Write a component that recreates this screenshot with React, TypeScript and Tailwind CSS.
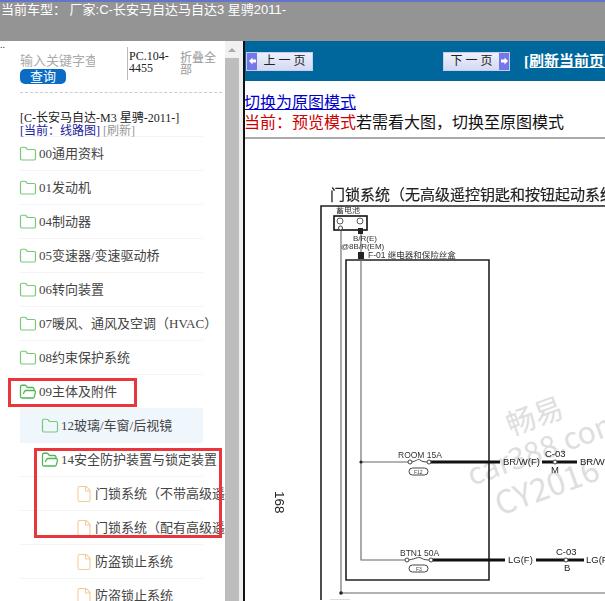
import { File, Folder, FolderOpen } from "lucide-react";

const serif = "font-['Liberation_Serif','Noto_Sans_CJK_SC',serif]";

const topFolders = ["00通用资料", "01发动机", "04制动器", "05变速器/变速驱动桥", "06转向装置", "07暖风、通风及空调（HVAC）", "08约束保护系统"];

function Row({ level = 0, open, file, active, children }: { level?: number; open?: boolean; file?: boolean; active?: boolean; children: string }) {
  const pad = level === 0 ? "pl-0" : level === 1 ? "pl-[22px]" : "pl-[55px]";
  return (
    <div className={`flex h-[34px] w-[183px] shrink-0 items-center border-b border-[#f4f4f4] ${pad} ${active ? "bg-[#eff6fc]" : ""}`}>
      {file ? (
        <File size={18} strokeWidth={1.4} className="shrink-0 text-[#f3c994]" />
      ) : open ? (
        <FolderOpen size={18} strokeWidth={1.7} className="-ml-px shrink-0 text-[#4fb653]" />
      ) : (
        <Folder size={18} strokeWidth={1.6} className="-ml-px shrink-0 text-[#78c87a]" />
      )}
      <span className="whitespace-nowrap pl-[2px] text-[13px] text-[#444]">{children}</span>
    </div>
  );
}

function PageButton({ label, dir }: { label: string; dir: "prev" | "next" }) {
  const arrow = (
    <span className="flex h-full w-[10px] items-center justify-center bg-[#7378e6]">
      <svg width="7" height="8" viewBox="0 0 7 8">
        <path d={dir === "prev" ? "M0 4 3.5 0.5V2.5H7V5.5H3.500V7.5Z" : "M7 4 3.5 0.5V2.5H0V5.5H3.5V7.5Z"} fill="#fff" />
      </svg>
    </span>
  );
  return (
    <div className="flex h-[19px] w-[67px] shrink-0 items-stretch border border-[#c6cdf0] bg-gradient-to-b from-[#eef0fb] to-[#d5d9f2]">
      {dir === "prev" && arrow}
      <span className={`flex-1 whitespace-pre text-center text-[12px] leading-[17px] text-[#222] ${serif}`}>{label}</span>
      {dir === "next" && arrow}
    </div>
  );
}

function Diagram() {
  return (
    <svg viewBox="245 140 360 461" className="h-[461px] w-[360px]" fill="none">
      <g fill="#dedede" fontFamily="'Noto Sans CJK SC', 'Liberation Sans', sans-serif">
        <text x="511" y="437" fontSize="29" transform="rotate(-20 511 437)">畅易</text>
        <text x="472" y="487" fontSize="30" transform="rotate(-20 472 487)">car388.com</text>
        <text x="500" y="517" fontSize="32" transform="rotate(-20 500 517)">CY2016</text>
      </g>
      <g className="blur-[0.3px]">
        <text x="330" y="201" fontSize="15" fill="#222" stroke="#222" strokeWidth="0.2" fontFamily="'Noto Sans CJK SC', sans-serif">门锁系统（无高级遥控钥匙和按钮起动系统</text>
        <path d="M321 601V207H605" stroke="#222" strokeWidth="1.6" />
        <path d="M346 261H489V581H346Z" stroke="#222" strokeWidth="1.6" />
        <path d="M341 231V594H605M361 231V561H405M361 463H408" stroke="#666" strokeWidth="1.1" />
        <rect x="334" y="217" width="33" height="14" stroke="#111" strokeWidth="1.6" />
        <circle cx="340" cy="222" r="3" stroke="#555" />
        <circle cx="360" cy="222" r="3" stroke="#555" />
        <circle cx="340.500" cy="229" r="2" fill="#fff" stroke="#444" />
        <rect x="358" y="229" width="5" height="6" fill="#222" />
        <rect x="358" y="253" width="6" height="7" fill="#222" />
        <circle cx="361" cy="463" r="1.6" fill="#222" />
        <circle cx="341" cy="594" r="1.8" fill="#222" />
        <path d="M330 601H350" stroke="#bbb" />
        <g fill="#333" fontFamily="'Liberation Sans', 'Noto Sans CJK SC', sans-serif" fontSize="8">
          <text x="336" y="214">蓄电池</text>
          <text x="353" y="242">B/R(E)</text>
          <text x="341" y="250">@8B/R(EM)</text>
          <text x="368" y="259" fontSize="8.500">F-01 继电器和保险丝盒</text>
          <text x="398" y="459" fontSize="8.500">ROOM 15A</text>
          <text x="400" y="557" fontSize="8.500">BTN1 50A</text>
        </g>
        <g fill="#222" fontFamily="'Liberation Sans', sans-serif" fontSize="9.500">
          <text x="503" y="466">BR/W(F)</text>
          <text x="545" y="458">C-03</text>
          <text x="551" y="474">M</text>
          <text x="580" y="466">BR/W</text>
          <text x="508" y="564">LG(F)</text>
          <text x="556" y="556">C-03</text>
          <text x="564" y="572">B</text>
          <text x="586" y="564">LG(F)</text>
        </g>
        <text x="275" y="492" fontSize="13.500" fill="#222" fontFamily="'Liberation Sans', sans-serif" transform="rotate(90 275 492)">168</text>
        <path d="M430 463H500M542 463H577M432 561H505M536 561H584" stroke="#111" strokeWidth="3" />
        <path d="M410 463C416 463 418 459 420 461S426 463 428 463M407 561C414 561 418 557 421 559S428 561 430 561" stroke="#444" />
        <circle cx="410" cy="463" r="2" fill="#fff" stroke="#444" />
        <circle cx="429" cy="463" r="2" fill="#fff" stroke="#444" />
        <circle cx="407" cy="561" r="2" fill="#fff" stroke="#444" />
        <circle cx="431" cy="561" r="2" fill="#fff" stroke="#444" />
        <circle cx="555" cy="463" r="2" fill="#fff" stroke="#444" />
        <circle cx="566" cy="561" r="2" fill="#fff" stroke="#444" />
        <rect x="409" y="469" width="19" height="7" rx="3.500" stroke="#444" />
        <rect x="409" y="566" width="19" height="7" rx="3.500" stroke="#444" />
        <g fill="#444" fontFamily="'Liberation Sans', sans-serif" fontSize="5">
          <text x="414" y="474.500">F12</text>
          <text x="416" y="571.500">F3</text>
        </g>
      </g>
    </svg>
  );
}

export default function App() {
  return (
    <div className="flex h-[601px] w-[605px] flex-col overflow-hidden bg-white font-['Liberation_Sans','Noto_Sans_CJK_SC',sans-serif]">
      <header className="h-[41px] shrink-0 border-t-2 border-[#6474cc] bg-[#949494] pl-[1px] text-[13px] leading-[16px] text-white">
        当前车型： 厂家:C-长安马自达马自达3 星骋2011-
      </header>
      <div className="flex min-h-0 flex-1">
        <aside className={`relative w-[225px] shrink-0 overflow-hidden ${serif}`}>
          <div className="h-[6px] pt-px text-[10px] leading-[6px] text-[#333]">..</div>
          <div className="ml-[20px] flex h-[46px] w-[202px] border-b border-dashed border-[#ccc]">
            <div className="w-[75px] shrink-0 pt-[5px]">
              <div className="h-[17px] overflow-hidden whitespace-nowrap text-[13px] leading-[17px] text-[#aaa]">输入关键字查询</div>
              <button type="button" className="block h-[15px] w-[46px] rounded-[5px] bg-[#0a6cc4] text-[13px] leading-[15px] text-white">查询</button>
            </div>
            <div className="ml-[32px] h-[33px] w-[50px] shrink-0 border-l border-[#bbb] pt-[3px] pl-[1px] text-[12px] leading-[12px] text-[#222]">PC.104-4455</div>
            <div className="ml-[3px] w-[36px] pt-[5px] text-[12px] leading-[12px] text-[#999]">折叠全部</div>
          </div>
          <div className="ml-[20px] flex w-[183px] flex-col">
            <div className="h-[44px] border-b border-[#f4f4f4] pt-[19px] text-[12px] leading-[13px] text-[#222]">
              <div className="whitespace-nowrap">[C-长安马自达-M3 星骋-2011-]</div>
              <div className="whitespace-nowrap text-[#1a1a9c]">
                [当前：线路图] <span className="text-[#999]">[刷新]</span>
              </div>
            </div>
            {topFolders.map((name) => (
              <Row key={name}>{name}</Row>
            ))}
            <Row open>09主体及附件</Row>
            <Row level={1} active>12玻璃/车窗/后视镜</Row>
            <Row level={1} open>14安全防护装置与锁定装置</Row>
            <Row level={2} file>门锁系统（不带高级遥控钥匙）</Row>
            <Row level={2} file>门锁系统（配有高级遥控钥匙）</Row>
            <Row level={2} file>防盗锁止系统</Row>
            <Row level={2} file>防盗锁止系统</Row>
          </div>
          <div className="absolute top-[337px] left-[8px] h-[29px] w-[129px] border-[3px] border-[#e8363c]" />
          <div className="absolute top-[407px] left-[34px] h-[90px] w-[188px] border-[3px] border-[#e8363c]" />
        </aside>
        <div className="flex w-[14px] shrink-0 flex-col bg-[#bdbdbd]">
          <div className="flex h-[17px] items-center justify-center bg-[#f1f1f1]">
            <div className="h-0 w-0 border-x-[4px] border-b-[4px] border-x-transparent border-b-[#aaa]" />
          </div>
        </div>
        <div className="w-[4px] shrink-0 bg-[#efefef]" />
        <main className={`min-w-0 flex-1 overflow-hidden border-l-2 border-[#111] ${serif}`}>
          <nav className="flex h-[40px] items-center whitespace-nowrap bg-[#00679c] pl-[1px]">
            <PageButton label="上 一 页" dir="prev" />
            <div className="ml-[130px] shrink-0">
              <PageButton label="下 一 页" dir="next" />
            </div>
            <a className="ml-[14px] shrink-0 text-[15px] font-bold text-white underline">[刷新当前页面]</a>
          </nav>
          <div className="-ml-px h-[58px] whitespace-nowrap border-b-2 border-[#aaa] pt-[12px] text-[16px] leading-[20px] text-[#111]">
            <a className="block text-[#0000cc] underline">切换为原图模式</a>
            <div>
              <span className="text-[#cc0000]">当前：预览模式</span>若需看大图，切换至原图模式
            </div>
          </div>
          <Diagram />
        </main>
      </div>
    </div>
  );
}
